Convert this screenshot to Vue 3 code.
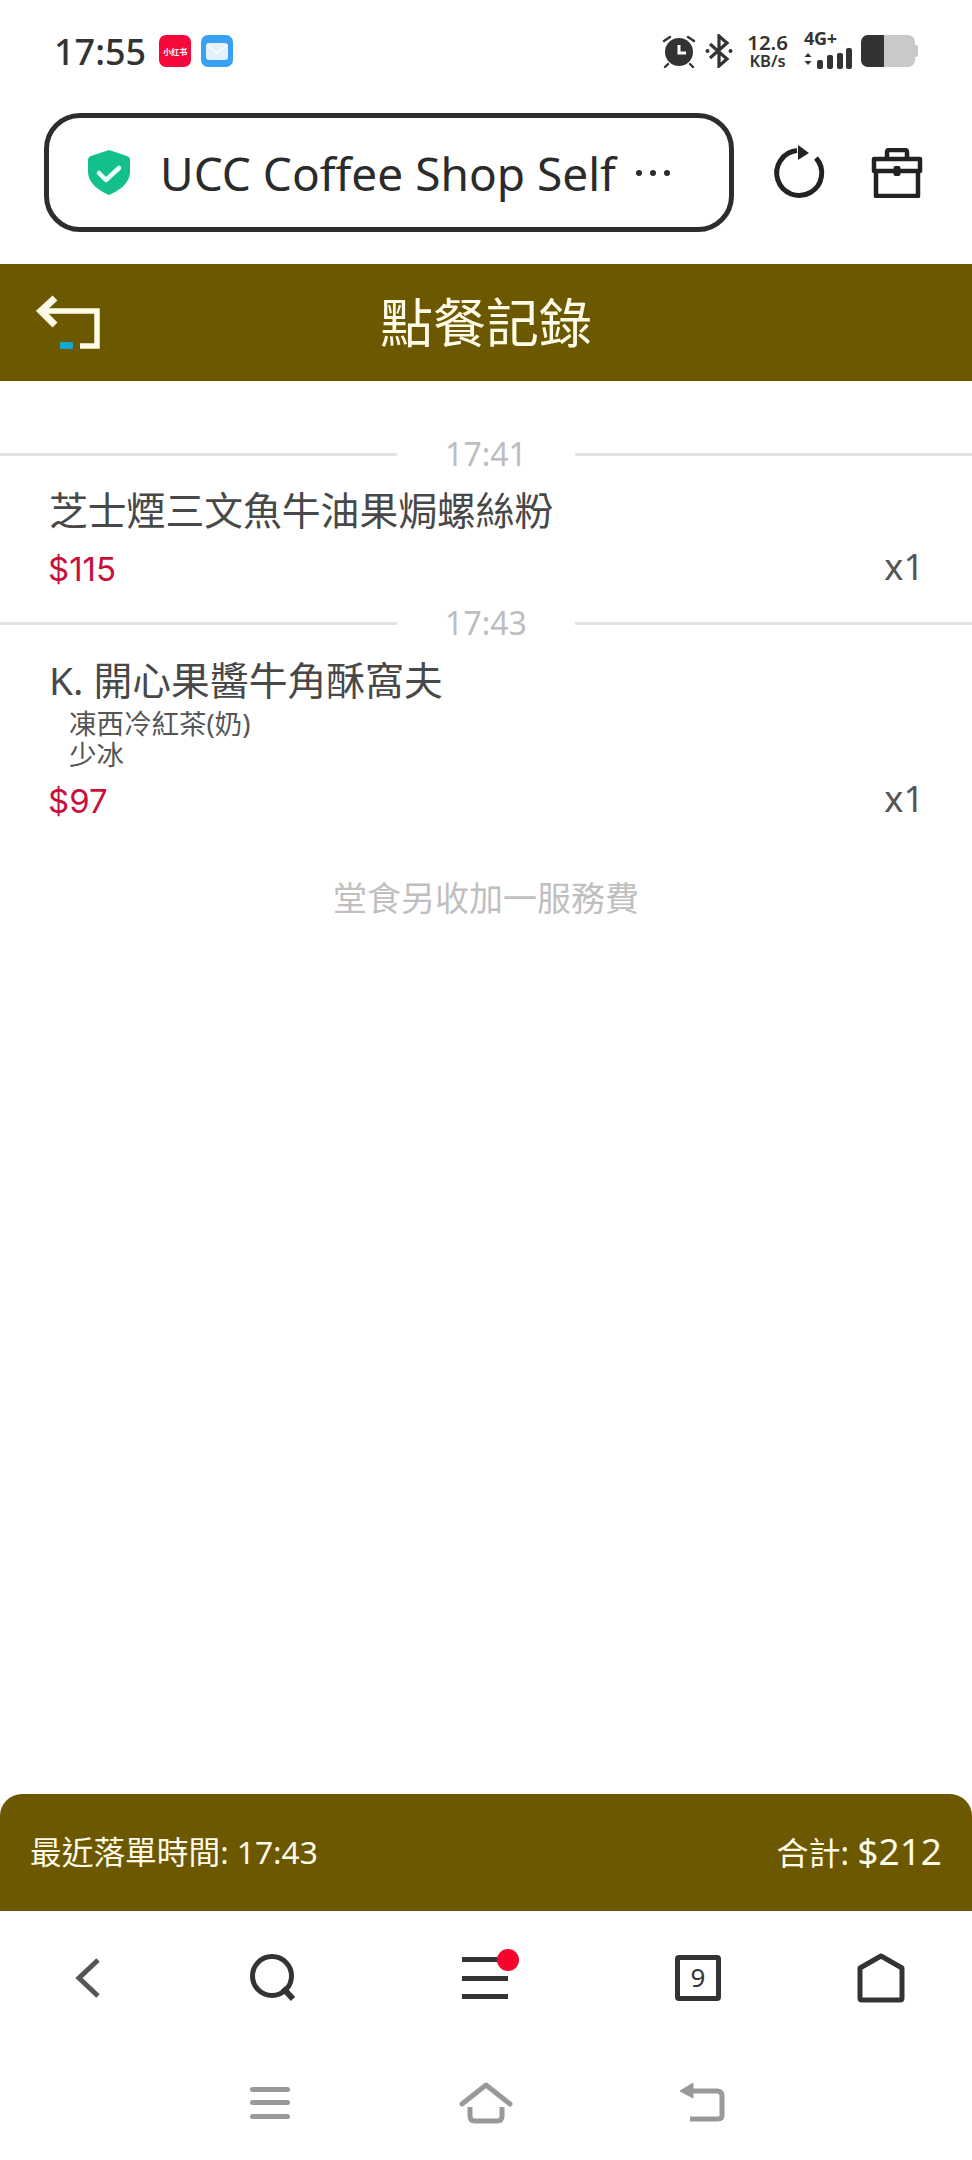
<script setup>
const orders = [
  { time: '17:41', name: '芝士煙三文魚牛油果焗螺絲粉', subs: [], price: '$115', qty: 'x1', cls: 'first' },
  { time: '17:43', name: 'K. 開心果醬牛角酥窩夫', subs: ['凍西冷紅茶(奶)', '少冰'], price: '$97', qty: 'x1', cls: 'second' }
]
</script>

<template>
  <div class="page">
    <div class="status">
      <div class="status-left">
        <span class="clock">17:55</span>
        <span class="app red">小红书</span>
        <span class="app blue">
          <svg width="22" height="17" viewBox="0 0 22 17"><rect width="22" height="17" rx="3" fill="#e4f0fb"/><path d="M1 2l10 8 10-8" fill="none" stroke="#fff" stroke-width="1.6"/></svg>
        </span>
      </div>
      <div class="status-right">
        <svg class="alarm" width="34" height="34" viewBox="0 0 34 34">
          <circle cx="17" cy="18" r="14" fill="#333"/>
          <path d="M17 11v8h7" fill="none" stroke="#fff" stroke-width="3"/>
          <path d="M2 7l6-4M32 7l-6-4M6 30l-3 3M28 30l3 3" stroke="#333" stroke-width="2.4" stroke-linecap="round"/>
        </svg>
        <svg class="bt" width="28" height="34" viewBox="0 0 28 34">
          <path d="M5 10l17 15-8 7V2l8 7L5 24" fill="none" stroke="#333" stroke-width="3.2"/>
          <circle cx="2.5" cy="17" r="2" fill="#333"/><circle cx="25.5" cy="17" r="2" fill="#333"/>
        </svg>
        <div class="speed"><span>12.6</span><span>KB/s</span></div>
        <div class="net">
          <span class="net-type">4G+</span>
          <svg width="50" height="21" viewBox="0 0 50 21" class="bars">
            <path d="M4 5l3.500 4h-7zM4 17l3.500-4h-7z" fill="#333"/>
            <rect x="13" y="12" width="6" height="9" rx="2" fill="#333"/>
            <rect x="23" y="7" width="6" height="14" rx="2" fill="#333"/>
            <rect x="33" y="5" width="6" height="16" rx="2" fill="#333"/>
            <rect x="42" y="0" width="6" height="21" rx="2" fill="#333"/>
          </svg>
        </div>
        <div class="battery"><span class="charge"></span><span class="tip"></span></div>
      </div>
    </div>

    <div class="browser">
      <div class="url">
        <svg class="shield" width="42" height="45" viewBox="0 0 42 45">
          <path d="M21 0l18 6c2 .7 3 2 3 4v12c0 11-11 19-21 23C11 41 0 33 0 22V10c0-2 1-3.300 3-4z" fill="#13c08c"/>
          <path d="M11 23l7 7 13-12" fill="none" stroke="#eafff7" stroke-width="4.500" stroke-linecap="round" stroke-linejoin="round"/>
        </svg>
        <span class="url-text">UCC Coffee Shop Self</span>
        <span class="dots"><i></i><i></i><i></i></span>
      </div>
      <svg class="refresh" width="56" height="56" viewBox="0 0 56 56">
        <path d="M45 13A22.500 22.500 0 1 1 26 5.600" fill="none" stroke="#222" stroke-width="5"/>
        <path d="M27 0l11 8-11 7z" fill="#222"/>
      </svg>
      <svg class="toolbox" width="52" height="50" viewBox="0 0 52 50">
        <path d="M3 11h46v12H3zM5 23v25h42V23" fill="none" stroke="#222" stroke-width="4.500" stroke-linejoin="round"/>
        <path d="M16 10V4q0-2 2-2h16q2 0 2 2v6" fill="none" stroke="#222" stroke-width="4.500"/>
        <rect x="22.500" y="18" width="7" height="10" rx="2" fill="#222"/>
      </svg>
    </div>

    <header class="head">
      <svg class="head-back" width="66" height="56" viewBox="0 0 66 56">
        <path d="M19 3L5 16l14 14" fill="none" stroke="#fffbe8" stroke-width="7"/>
        <path d="M6 16h55v35H44" fill="none" stroke="#fffbe8" stroke-width="5.500"/>
        <rect x="24" y="47" width="13" height="7" rx="1" fill="#11a9cf"/>
      </svg>
      <h1>點餐記錄</h1>
    </header>

    <main class="content">
      <section v-for="o in orders" :key="o.time" class="order" :class="o.cls">
        <div class="sep"><span>{{ o.time }}</span></div>
        <div class="name">{{ o.name }}</div>
        <div v-if="o.subs.length" class="subs">
          <div v-for="s in o.subs" :key="s">{{ s }}</div>
        </div>
        <div class="line">
          <span class="price">{{ o.price }}</span>
          <span class="qty">{{ o.qty }}</span>
        </div>
      </section>
      <p class="note">堂食另收加一服務費</p>
    </main>

    <footer class="summary">
      <span class="last">最近落單時間: 17:43</span>
      <span class="total">合計: <b>$212</b></span>
    </footer>

    <nav class="nav">
      <span class="cell">
        <svg width="26" height="42" viewBox="0 0 26 42"><path d="M23 3L4 21l19 18" fill="none" stroke="#555" stroke-width="5"/></svg>
      </span>
      <span class="cell">
        <svg width="48" height="48" viewBox="0 0 48 48"><circle cx="23" cy="22" r="19.500" fill="none" stroke="#333" stroke-width="5"/><path d="M34 34l10 11" stroke="#333" stroke-width="6"/></svg>
      </span>
      <span class="cell menu">
        <span class="bar"></span><span class="bar"></span><span class="bar"></span>
        <i class="dot"></i>
      </span>
      <span class="cell">
        <span class="tabs">9</span>
      </span>
      <span class="cell">
        <svg width="48" height="50" viewBox="0 0 48 50"><path d="M24 3L45 15v30q0 2-2 2H5q-2 0-2-2V15z" fill="none" stroke="#333" stroke-width="5" stroke-linejoin="round"/></svg>
      </span>
    </nav>

    <div class="sys">
      <span class="cell">
        <span class="sys-menu"><i></i><i></i><i></i></span>
      </span>
      <span class="cell">
        <svg width="54" height="42" viewBox="0 0 54 42"><path d="M3 22L27 3l24 19" fill="none" stroke="#999" stroke-width="5" stroke-linecap="round" stroke-linejoin="round"/><path d="M11 25v9q0 5 5 5h22q5 0 5-5v-9" fill="none" stroke="#999" stroke-width="5"/></svg>
      </span>
      <span class="cell">
        <svg width="46" height="40" viewBox="0 0 46 40"><path d="M14 0v15L1 8z" fill="#999" stroke="#999" stroke-linejoin="round"/><path d="M8 8h30q5 0 5 5v19q0 4-4 4H11" fill="none" stroke="#999" stroke-width="5"/></svg>
      </span>
    </div>
  </div>
</template>

<style scoped>
.page {
  width: 972px;
  height: 2160px;
  display: flex;
  flex-direction: column;
  background: #fff;
  color: #444;
  overflow: hidden;
  font-family: "Noto Sans", "Noto Sans CJK TC", sans-serif;
}
.status {
  height: 102px;
  flex: none;
  display: flex;
  align-items: center;
  justify-content: space-between;
  padding: 0 57px 0 54px;
  box-sizing: border-box;
}
.status-left, .status-right { display: flex; align-items: center; }
.clock { font-size: 36px; font-weight: 500; color: #333; margin-right: 13px; }
.app {
  width: 32px;
  height: 32px;
  border-radius: 7px;
  margin-right: 10px;
  display: flex;
  align-items: center;
  justify-content: center;
}
.red {
  background: #f5093c;
  color: #fff;
  font-size: 8px;
  font-weight: 700;
  white-space: nowrap;
}
.blue { background: #38a1f2; }
.alarm { margin-right: 9px; }
.bt { margin-right: 14px; }
.speed {
  display: flex;
  flex-direction: column;
  align-items: center;
  font-weight: 600;
  color: #333;
  margin-right: 16px;
}
.speed span:first-child { font-size: 20.500px; line-height: 19px; }
.speed span:last-child { font-size: 16.500px; line-height: 18px; }
.net { width: 50px; height: 34px; position: relative; margin-right: 7px; }
.net-type { position: absolute; left: 0; top: -6px; font-size: 18px; font-weight: 700; color: #333; line-height: 20px; letter-spacing: -.3px; }
.bars { position: absolute; left: 0; bottom: -1px; }
.battery { width: 54px; height: 32px; display: flex; align-items: center; position: relative; background: #c9c9c9; border-radius: 7px; }
.charge { width: 23px; height: 32px; background: #333; border-radius: 7px 0 0 7px; }
.tip { position: absolute; right: -3px; top: 10px; width: 3px; height: 12px; background: #c9c9c9; border-radius: 0 2px 2px 0; }

.browser {
  height: 162px;
  flex: none;
  box-sizing: border-box;
  display: flex;
  align-items: flex-start;
  padding: 11px 0 0 44px;
}
.url {
  width: 690px;
  height: 119px;
  box-sizing: border-box;
  border: 5px solid #2d2d2d;
  border-radius: 36px;
  display: flex;
  align-items: center;
  padding-left: 39px;
}
.shield { margin-right: 30px; }
.url-text { font-size: 46px; color: #2b2b2b; white-space: nowrap; }
.dots { display: flex; gap: 8px; margin-left: 20px; }
.dots i { width: 6px; height: 6px; border-radius: 50%; background: #2b2b2b; }
.refresh { margin: 32px 0 0 37px; }
.toolbox { margin: 35px 0 0 44px; }

.head {
  height: 117px;
  flex: none;
  box-sizing: border-box;
  padding-bottom: 5px;
  background: #6b5800;
  display: flex;
  align-items: center;
  justify-content: center;
  position: relative;
}
.head h1 {
  margin: 0;
  font-size: 53px;
  font-weight: 400;
  color: #fffbe8;
  line-height: 1;
  font-family: "Noto Sans CJK TC", sans-serif;
}
.head-back { position: absolute; left: 36px; top: 31px; }

.content { flex: 1; min-height: 0; padding-top: 50px; }
.sep {
  display: flex;
  align-items: center;
  height: 46px;
  font-size: 32px;
  color: #bdbdbd;
}
.sep span { padding: 0 48px; line-height: 46px; }
.sep::before, .sep::after { content: ""; flex: 1; height: 3px; background: #e4e4e4; }
.name {
  font-size: 38.800px;
  line-height: 50px;
  margin-left: 49px;
  color: #484848;
  white-space: nowrap;
}
.subs {
  font-size: 27.500px;
  line-height: 31px;
  margin: 3px 0 0 69px;
  color: #555;
}
.line {
  display: flex;
  justify-content: space-between;
  align-items: center;
  padding: 0 48px 0 48px;
  height: 50px;
}
.first .name { margin-top: 8px; }
.first .line { margin-top: 9px; }
.second { margin-top: 6px; }
.second .name { margin-top: 9px; }
.second .line { margin-top: 6px; }
.price { font-family: Inter, "Noto Sans", sans-serif; font-size: 33px; color: #c8103c; }
.qty { font-size: 36px; color: #555; margin-bottom: 5px; }
.note {
  margin: 47px 0 0;
  text-align: center;
  font-size: 34px;
  line-height: 50px;
  color: #bfbfbf;
}

.summary {
  height: 117px;
  flex: none;
  box-sizing: border-box;
  padding: 0 30px 5px 30px;
  background: #6b5800;
  border-radius: 22px 22px 0 0;
  display: flex;
  align-items: center;
  justify-content: space-between;
  color: #fffbe8;
}
.last { font-size: 31.700px; }
.total { font-size: 32px; }
.total b { font-size: 37px; font-weight: 400; }

.nav, .sys {
  flex: none;
  display: grid;
  align-items: center;
  justify-items: center;
}
.nav { height: 134px; grid-template-columns: 176px 194px 230px 196px 170px; }
.sys {
  height: 115px;
  grid-template-columns: repeat(3, 216px);
  justify-content: center;
}
.cell { display: flex; align-items: center; justify-content: center; }
.menu {
  width: 46px;
  height: 42px;
  flex-direction: column;
  justify-content: space-between;
  position: relative;
}
.bar { width: 46px; height: 5px; background: #333; }
.dot {
  position: absolute;
  right: -11px;
  top: -8px;
  width: 22px;
  height: 22px;
  border-radius: 50%;
  background: #f5052c;
}
.tabs {
  width: 46px;
  height: 46px;
  box-sizing: border-box;
  border: 5px solid #333;
  border-radius: 4px;
  font-size: 26px;
  line-height: 34px;
  text-align: center;
  color: #333;
}
.sys-menu {
  width: 40px;
  height: 32px;
  display: flex;
  flex-direction: column;
  justify-content: space-between;
}
.sys-menu i { height: 5px; border-radius: 3px; background: #999; }
</style>

<style>
html, body { margin: 0; padding: 0; background: #fff; }
</style>
